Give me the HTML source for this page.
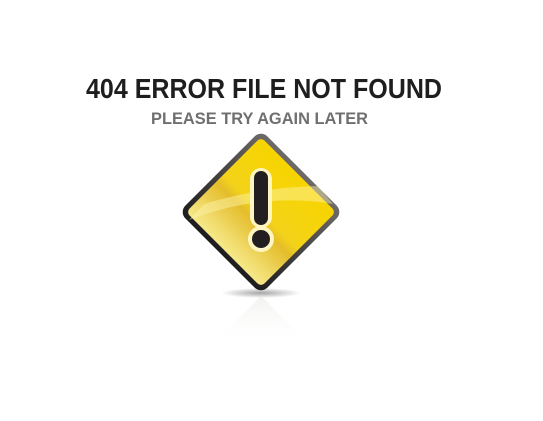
<!DOCTYPE html>
<html><head><meta charset="utf-8"><style>
html,body{margin:0;padding:0;background:#fff;width:543px;height:421px;overflow:hidden}
svg{display:block;overflow:hidden}
</style></head><body>
<svg width="543" height="421" viewBox="0 0 543 421" xmlns="http://www.w3.org/2000/svg">
<defs>
<linearGradient id="y" x1="0" y1="0" x2="0" y2="1">
<stop offset="0" stop-color="#f7d400"/>
<stop offset="0.5" stop-color="#f3d31a"/>
<stop offset="0.6" stop-color="#e4bd2a"/>
<stop offset="1" stop-color="#f6e98a"/>
</linearGradient>
<linearGradient id="rim" x1="0" y1="0" x2="0" y2="1">
<stop offset="0" stop-color="#6e6a6a"/>
<stop offset="1" stop-color="#1e1c1c"/>
</linearGradient>
<linearGradient id="rf" x1="0" y1="0" x2="0" y2="1">
<stop offset="0" stop-color="#d8d8d0" stop-opacity="0.7"/>
<stop offset="1" stop-color="#ffffff" stop-opacity="0"/>
</linearGradient>
<radialGradient id="sh" cx="0.5" cy="0.5" r="0.5">
<stop offset="0" stop-color="#000" stop-opacity="0.35"/>
<stop offset="1" stop-color="#000" stop-opacity="0"/>
</radialGradient>
</defs>
<text x="86" y="98" font-family="Liberation Sans, sans-serif" font-weight="bold" font-size="28" fill="#1e1e1e" textLength="356" lengthAdjust="spacingAndGlyphs">404 ERROR FILE NOT FOUND</text>
<text x="151" y="124" font-family="Liberation Sans, sans-serif" font-weight="bold" font-size="16.5" fill="#6f6f6f" textLength="217" lengthAdjust="spacingAndGlyphs">PLEASE TRY AGAIN LATER</text>
<ellipse cx="261" cy="293" rx="40" ry="5" fill="url(#sh)"/>
<path d="M261,296 L310,345 L212,345 Z" fill="url(#rf)" opacity="0.5"/>
<g transform="translate(261,212)">
<rect x="-58" y="-58" width="116" height="116" rx="9" transform="rotate(45)" fill="url(#rim)"/>
<rect x="-53" y="-53" width="106" height="106" rx="5" transform="rotate(45)" fill="url(#y)"/>
<path d="M-72,8 Q0,-20 72,-8 L57,-26 Q0,-25 -57,-8Z" fill="#fff6b0" opacity="0.45"/>
<rect x="-11" y="-44" width="22" height="60" rx="11" fill="#fff5c0"/>
<circle cx="0" cy="27" r="13" fill="#fff5c0"/>
<rect x="-7" y="-41" width="14" height="54" rx="7" fill="#231f20"/>
<circle cx="0" cy="27" r="9" fill="#231f20"/>
</g>
</svg>
</body></html>
